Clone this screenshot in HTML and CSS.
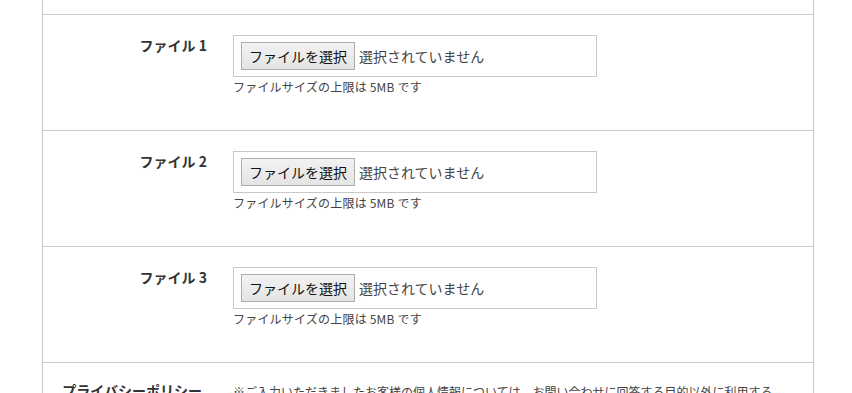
FILE: index.html
```html
<!DOCTYPE html>
<html lang="ja">
<head>
<meta charset="utf-8">
<title>お問い合わせ</title>
<link rel="stylesheet" href="styles.css">
</head>
<body>
<div class="form">
  <div class="row row-top"></div>
  <div class="row">
    <div class="label">ファイル 1</div>
    <div class="field">
      <div class="filebox"><button class="filebtn" type="button">ファイルを選択</button><span class="filename">選択されていません</span></div>
      <p class="note">ファイルサイズの上限は 5MB です</p>
    </div>
  </div>
  <div class="row">
    <div class="label">ファイル 2</div>
    <div class="field">
      <div class="filebox"><button class="filebtn" type="button">ファイルを選択</button><span class="filename">選択されていません</span></div>
      <p class="note">ファイルサイズの上限は 5MB です</p>
    </div>
  </div>
  <div class="row">
    <div class="label">ファイル 3</div>
    <div class="field">
      <div class="filebox"><button class="filebtn" type="button">ファイルを選択</button><span class="filename">選択されていません</span></div>
      <p class="note">ファイルサイズの上限は 5MB です</p>
    </div>
  </div>
  <div class="row row-policy">
    <div class="label label-policy">プライバシーポリシー</div>
    <div class="field field-policy">
      <p class="policy">※ご入力いただきましたお客様の個人情報については、お問い合わせに回答する目的以外に利用することはありません。</p>
    </div>
  </div>
</div>
</body>
</html>
```

FILE: styles.css
```css
html, body {
  margin: 0;
  padding: 0;
  background: #fff;
  overflow: hidden;
}
body {
  font-family: "Noto Sans CJK JP", "Noto Sans", sans-serif;
  color: #333;
  height: 393px;
}
.form {
  margin-left: 42px;
  width: 770px;
  border-left: 1px solid #c8c8c8;
  border-right: 1px solid #c8c8c8;
}
.row {
  display: grid;
  grid-template-columns: 190px 1fr;
  height: 115px;
  border-top: 1px solid #c8c8c8;
}
.row-top {
  height: 14px;
  border-top: none;
}
.label {
  box-sizing: border-box;
  padding: 20px 26px 0 0;
  text-align: right;
  font-size: 14px;
  font-weight: bold;
  line-height: 20px;
  color: #333;
}
.field {
  padding-top: 20px;
}
.filebox {
  box-sizing: border-box;
  width: 364px;
  height: 42px;
  border: 1px solid #c8c8c8;
  display: flex;
  align-items: center;
  gap: 4px;
  padding: 0 7px;
}
.filebtn {
  box-sizing: border-box;
  height: 28px;
  padding: 0 7px;
  border: 1px solid #adadad;
  border-radius: 0;
  background: linear-gradient(#f2f2f2, #e4e4e4);
  font-family: inherit;
  font-size: 14px;
  line-height: 26px;
  color: #111;
}
.filename {
  font-size: 14px;
  line-height: 20px;
  color: #444;
}
.note {
  margin: 1px 0 0;
  font-size: 12px;
  line-height: 18px;
  letter-spacing: 0.2px;
  color: #444;
}
.label-policy {
  padding-top: 17px;
  padding-right: 31px;
}
.field-policy {
  padding-top: 18px;
  padding-right: 34px;
}
.policy {
  margin: 0;
  font-size: 12px;
  line-height: 22px;
  color: #444;
}
```
